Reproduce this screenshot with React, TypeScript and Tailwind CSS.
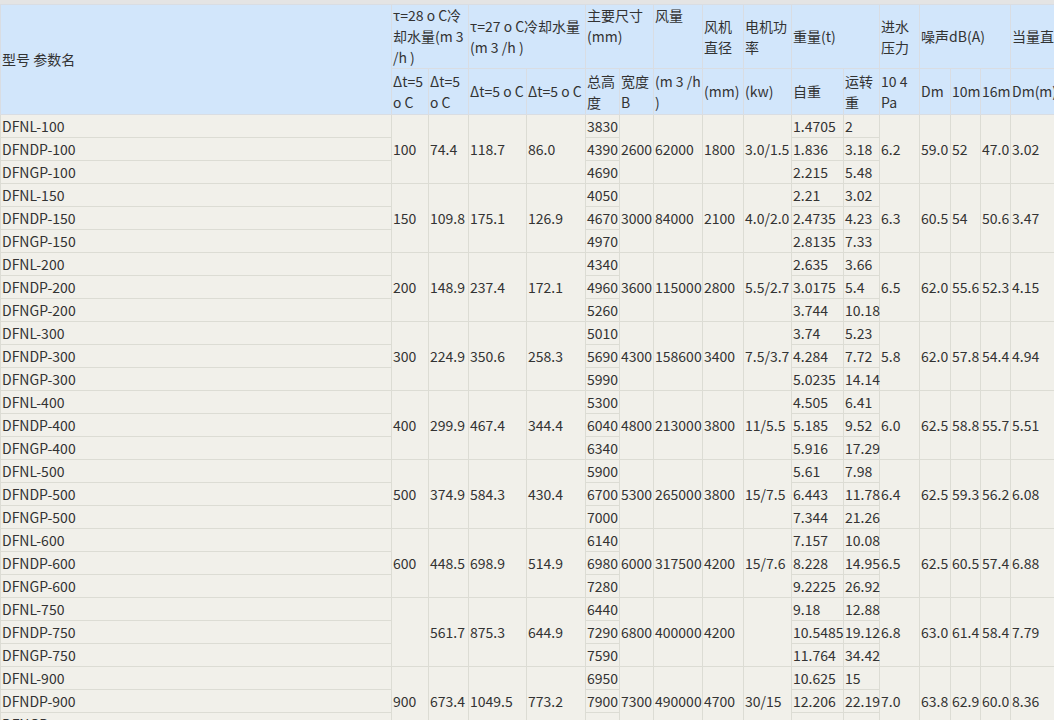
const widths = [391, 37, 40, 58, 59, 34, 34, 49, 41, 48, 52, 36, 40, 31, 30, 30, 60];

type Group = {
  m: string;
  c: [string, string, string, string];
  h: [string, string, string];
  b: string;
  air: string;
  fan: string;
  motor: string;
  w: [string, string][];
  p: string;
  n: [string, string, string, string];
};

const groups: Group[] = [
  { m: "100", c: ["100", "74.4", "118.7", "86.0"], h: ["3830", "4390", "4690"], b: "2600", air: "62000", fan: "1800", motor: "3.0/1.5", w: [["1.4705", "2"], ["1.836", "3.18"], ["2.215", "5.48"]], p: "6.2", n: ["59.0", "52", "47.0", "3.02"] },
  { m: "150", c: ["150", "109.8", "175.1", "126.9"], h: ["4050", "4670", "4970"], b: "3000", air: "84000", fan: "2100", motor: "4.0/2.0", w: [["2.21", "3.02"], ["2.4735", "4.23"], ["2.8135", "7.33"]], p: "6.3", n: ["60.5", "54", "50.6", "3.47"] },
  { m: "200", c: ["200", "148.9", "237.4", "172.1"], h: ["4340", "4960", "5260"], b: "3600", air: "115000", fan: "2800", motor: "5.5/2.7", w: [["2.635", "3.66"], ["3.0175", "5.4"], ["3.744", "10.18"]], p: "6.5", n: ["62.0", "55.6", "52.3", "4.15"] },
  { m: "300", c: ["300", "224.9", "350.6", "258.3"], h: ["5010", "5690", "5990"], b: "4300", air: "158600", fan: "3400", motor: "7.5/3.7", w: [["3.74", "5.23"], ["4.284", "7.72"], ["5.0235", "14.14"]], p: "5.8", n: ["62.0", "57.8", "54.4", "4.94"] },
  { m: "400", c: ["400", "299.9", "467.4", "344.4"], h: ["5300", "6040", "6340"], b: "4800", air: "213000", fan: "3800", motor: "11/5.5", w: [["4.505", "6.41"], ["5.185", "9.52"], ["5.916", "17.29"]], p: "6.0", n: ["62.5", "58.8", "55.7", "5.51"] },
  { m: "500", c: ["500", "374.9", "584.3", "430.4"], h: ["5900", "6700", "7000"], b: "5300", air: "265000", fan: "3800", motor: "15/7.5", w: [["5.61", "7.98"], ["6.443", "11.78"], ["7.344", "21.26"]], p: "6.4", n: ["62.5", "59.3", "56.2", "6.08"] },
  { m: "600", c: ["600", "448.5", "698.9", "514.9"], h: ["6140", "6980", "7280"], b: "6000", air: "317500", fan: "4200", motor: "15/7.6", w: [["7.157", "10.08"], ["8.228", "14.95"], ["9.2225", "26.92"]], p: "6.5", n: ["62.5", "60.5", "57.4", "6.88"] },
  { m: "750", c: ["", "561.7", "875.3", "644.9"], h: ["6440", "7290", "7590"], b: "6800", air: "400000", fan: "4200", motor: "", w: [["9.18", "12.88"], ["10.5485", "19.12"], ["11.764", "34.42"]], p: "6.8", n: ["63.0", "61.4", "58.4", "7.79"] },
  { m: "900", c: ["900", "673.4", "1049.5", "773.2"], h: ["6950", "7900", "8200"], b: "7300", air: "490000", fan: "4700", motor: "30/15", w: [["10.625", "15"], ["12.206", "22.19"], ["13.85", "36.5"]], p: "7.0", n: ["63.8", "62.9", "60.0", "8.36"] },
];

const th = "border border-[#d9dde3] px-[1px] py-0 align-middle text-left font-normal leading-[21px]";
const td = "border border-[#dcdcd4] px-[1px] py-0 h-[23px] leading-[22px] whitespace-nowrap overflow-visible";

export default function App() {
  return (
    <div className="w-[1054px] h-[720px] overflow-hidden bg-white text-[14px] text-[#333]" style={{ fontFamily: '"Noto Sans CJK SC", "Noto Sans", sans-serif' }}>
      <div className="h-[4px] bg-[#e4e4e4]" />
      <table className="table-fixed border-collapse w-[1070px]">
        <colgroup>
          {widths.map((w, i) => (
            <col key={i} style={{ width: w }} />
          ))}
        </colgroup>
        <thead className="bg-[#d2e6fb]">
          <tr className="h-[64px]">
            <th rowSpan={2} className={th}>型号 参数名</th>
            <th colSpan={2} className={th}>τ=28 ο C冷却水量(m 3 /h )</th>
            <th colSpan={2} className={th}>τ=27 ο C冷却水量(m 3 /h )</th>
            <th colSpan={2} className={th + " align-top"}>主要尺寸(mm)</th>
            <th className={th + " align-top"}>风量</th>
            <th className={th}>风机直径</th>
            <th className={th}>电机功率</th>
            <th colSpan={2} className={th}>重量(t)</th>
            <th className={th}>进水压力</th>
            <th colSpan={3} className={th}>噪声dB(A)</th>
            <th className={th}>当量直径</th>
          </tr>
          <tr className="h-[46px]">
            <th className={th}>Δt=5 ο C</th>
            <th className={th}>Δt=5 ο C</th>
            <th className={th}>Δt=5 ο C</th>
            <th className={th}>Δt=5 ο C</th>
            <th className={th}>总高度</th>
            <th className={th}>宽度B</th>
            <th className={th}>(m 3 /h )</th>
            <th className={th + " whitespace-nowrap"}> (mm)</th>
            <th className={th + " whitespace-nowrap"}> (kw)</th>
            <th className={th}>自重</th>
            <th className={th}>运转重</th>
            <th className={th}>10 4 Pa</th>
            <th className={th}>Dm</th>
            <th className={th}>10m</th>
            <th className={th}>16m</th>
            <th className={th + " whitespace-nowrap"}>Dm(m)</th>
          </tr>
        </thead>
        <tbody className="bg-[#f1f0ea]">
          {groups.map((g) =>
            ["DFNL", "DFNDP", "DFNGP"].map((pre, i) => (
              <tr key={g.m + pre}>
                <td className={td}>{pre}-{g.m}</td>
                {i === 0 && g.c.map((v, k) => <td key={k} rowSpan={3} className={td}>{v}</td>)}
                <td className={td}>{g.h[i]}</td>
                {i === 0 && (
                  <>
                    <td rowSpan={3} className={td}>{g.b}</td>
                    <td rowSpan={3} className={td}>{g.air}</td>
                    <td rowSpan={3} className={td}>{g.fan}</td>
                    <td rowSpan={3} className={td}>{g.motor}</td>
                  </>
                )}
                <td className={td}>{g.w[i][0]}</td>
                <td className={td}>{g.w[i][1]}</td>
                {i === 0 && (
                  <>
                    <td rowSpan={3} className={td}>{g.p}</td>
                    {g.n.map((v, k) => <td key={k} rowSpan={3} className={td}>{v}</td>)}
                  </>
                )}
              </tr>
            ))
          )}
        </tbody>
      </table>
    </div>
  );
}
